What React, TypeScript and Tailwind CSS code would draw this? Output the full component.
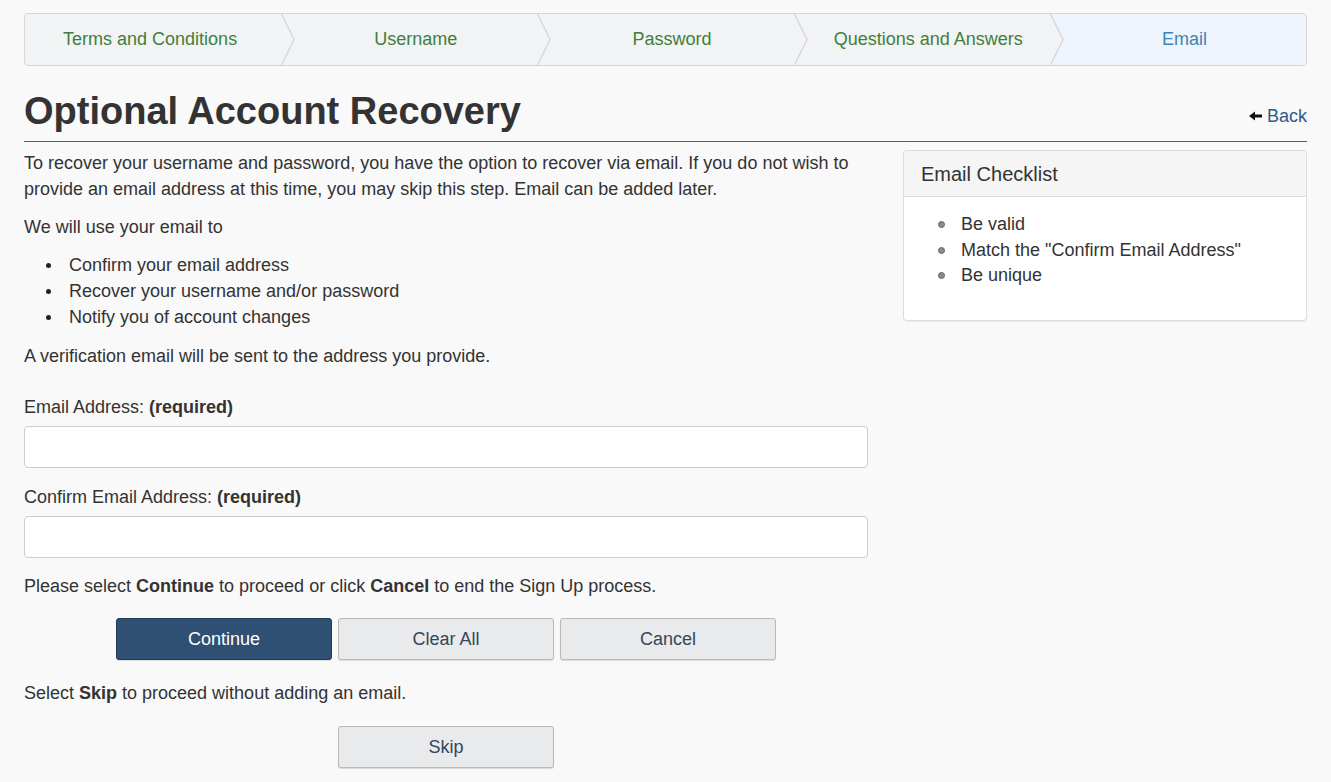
const steps = ["Terms and Conditions", "Username", "Password", "Questions and Answers", "Email"];

function Steps() {
  return (
    <div className="grid grid-cols-5 h-[53px] border border-[#d6d6d6] rounded-[4px] overflow-hidden bg-[#f2f3f5]">
      {steps.map((s, i) => {
        const active = i === steps.length - 1;
        return (
          <div
            key={s}
            className={`relative flex items-center justify-center text-[18px] ${
              active ? "bg-[#eef4fc] text-[#3b84b8]" : "text-[#3f7f3c]"
            } ${i > 0 ? "pl-[13px]" : "pr-[6px]"}`}
          >
            {i > 0 && (
              <svg className="absolute left-0 top-0 h-full w-[15px]" viewBox="0 0 15 51" preserveAspectRatio="none">
                <polygon points="0,0 13,25.5 0,51" fill="#f2f3f5" />
                <polyline points="0.5,0 13,25.5 0.5,51" fill="none" stroke="#d2d2d2" strokeWidth="1.2" />
              </svg>
            )}
            <span className="relative">{s}</span>
          </div>
        );
      })}
    </div>
  );
}

function Btn({ children, primary }: { children: React.ReactNode; primary?: boolean }) {
  return (
    <button
      type="button"
      className={`w-[216px] h-[42px] rounded-[3px] text-[18px] border ${
        primary
          ? "bg-[#2f5073] border-[#223c58] text-white"
          : "bg-[#e9eaec] border-[#b9b9b9] text-[#34465b]"
      } shadow-[0_1px_1px_rgba(0,0,0,0.12)]`}
    >
      {children}
    </button>
  );
}

function Item({ children, gray }: { children: React.ReactNode; gray?: boolean }) {
  return (
    <li className="flex items-center">
      {gray ? (
        <span className="w-[7px] h-[7px] rounded-full bg-[#8a8a8a] border border-[#666] ml-[34px] mr-[16px] shrink-0" />
      ) : (
        <span className="w-[5px] h-[5px] rounded-full bg-[#222] ml-[22px] mr-[18px] shrink-0" />
      )}
      <span>{children}</span>
    </li>
  );
}

export default function App() {
  return (
    <div
      className="min-h-screen bg-[#f9f9f9] text-[#333] px-[24px] pt-[13px] pb-[14px]"
      style={{ fontFamily: '"Liberation Sans", Arial, sans-serif' }}
    >
      <Steps />

      <div className="flex justify-between items-end mt-[23px] pb-[8px] border-b border-[#c8323a]">
        <h1 className="text-[38px] leading-[44px] font-bold text-[#333]">Optional Account Recovery</h1>
        <a href="#" className="flex items-center gap-[5px] text-[18px] leading-[24px] text-[#2d5b8a] mb-[5px]">
          <svg width="13" height="10" viewBox="0 0 13 10">
            <polygon points="0,5 6,0.5 6,3.5 13,3.5 13,6.5 6,6.5 6,9.5" fill="#111" />
          </svg>
          Back
        </a>
      </div>

      <div className="grid grid-cols-[844px_1fr] gap-[35px] mt-[8px] text-[18px] leading-[26px]">
        <div>
          <p className="mb-[12px]">
            To recover your username and password, you have the option to recover via email. If you do not wish to
            provide an email address at this time, you may skip this step. Email can be added later.
          </p>
          <p className="mb-[12px]">We will use your email to</p>
          <ul className="mb-[13px]">
            <Item>Confirm your email address</Item>
            <Item>Recover your username and/or password</Item>
            <Item>Notify you of account changes</Item>
          </ul>
          <p>A verification email will be sent to the address you provide.</p>

          <label className="block mt-[25px]">
            Email Address: <b>(required)</b>
          </label>
          <input type="email" className="block w-full h-[42px] mt-[6px] bg-white border border-[#ccc] rounded-[4px]" />

          <label className="block mt-[16px]">
            Confirm Email Address: <b>(required)</b>
          </label>
          <input type="email" className="block w-full h-[42px] mt-[6px] bg-white border border-[#ccc] rounded-[4px]" />

          <p className="mt-[15px]">
            Please select <b>Continue</b> to proceed or click <b>Cancel</b> to end the Sign Up process.
          </p>

          <div className="flex justify-center gap-[6px] mt-[19px]">
            <Btn primary>Continue</Btn>
            <Btn>Clear All</Btn>
            <Btn>Cancel</Btn>
          </div>

          <p className="mt-[20px]">
            Select <b>Skip</b> to proceed without adding an email.
          </p>

          <div className="flex justify-center mt-[20px]">
            <Btn>Skip</Btn>
          </div>
        </div>

        <div>
          <div className="bg-white border border-[#dcdcdc] rounded-[4px] shadow-[0_1px_1px_rgba(0,0,0,0.05)] overflow-hidden">
            <div className="h-[46px] flex items-center px-[17px] bg-[#f5f5f5] border-b border-[#dddddd] text-[20px] text-[#333]">
              Email Checklist
            </div>
            <ul className="pt-[15px] pb-[31px] leading-[25.5px]">
              <Item gray>Be valid</Item>
              <Item gray>Match the "Confirm Email Address"</Item>
              <Item gray>Be unique</Item>
            </ul>
          </div>
        </div>
      </div>
    </div>
  );
}
